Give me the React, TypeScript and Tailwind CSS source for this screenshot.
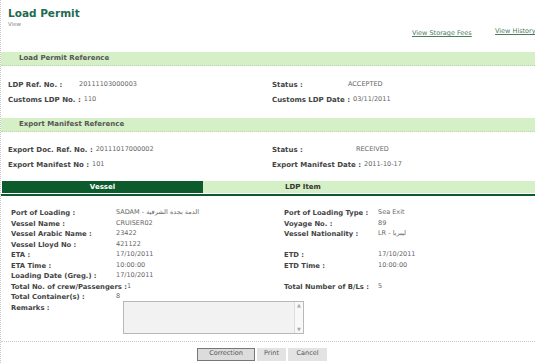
import React from 'react';

const font = { fontFamily: '"DejaVu Sans", Verdana, sans-serif' };

type Pair = { label: string; value: string; lw: number };

function RefRow({ left, right }: { left: Pair; right: Pair }) {
  return (
    <div className="flex h-[14.5px] items-center text-[6.5px] whitespace-nowrap">
      <div className="flex items-center w-[271px] pl-[7px]">
        <span className="pr-[3px] text-[7px] font-bold text-[#444] shrink-0" style={{ minWidth: left.lw }}>{left.label}</span>
        <span className="text-[#666]">{left.value}</span>
      </div>
      <div className="flex items-center">
        <span className="pr-[3px] text-[7px] font-bold text-[#444] shrink-0" style={{ minWidth: right.lw }}>{right.label}</span>
        <span className="text-[#666]">{right.value}</span>
      </div>
    </div>
  );
}

function Bar({ title }: { title: string }) {
  return (
    <div className="h-[14px] bg-[#d5efc6] border-b border-dotted border-[#b9d8a8] flex items-center pl-[18px] text-[7px] font-bold text-[#555]">
      {title}
    </div>
  );
}

const vesselRows: [string, string, string, string][] = [
  ['Port of Loading :', 'SADAM - الدمة بجدة الشرقية', 'Port of Loading Type :', 'Sea Exit'],
  ['Vessel Name :', 'CRUISER02', 'Voyage No. :', '89'],
  ['Vessel Arabic Name :', '23422', 'Vessel Nationality :', 'LR - ليبريا'],
  ['Vessel Lloyd No :', '421122', '', ''],
  ['ETA :', '17/10/2011', 'ETD :', '17/10/2011'],
  ['ETA Time :', '10:00:00', 'ETD Time :', '10:00:00'],
  ['Loading Date (Greg.) :', '17/10/2011', '', ''],
  ['Total No. of crew/Passengers :', '1', 'Total Number of B/Ls :', '5'],
  ['Total Container(s) :', '8', '', ''],
];

export default function App() {
  return (
    <div className="w-[535px] h-[363px] bg-white overflow-hidden border-l border-dotted border-[#c8c8c8]" style={font}>
      {/* Header */}
      <div className="h-[52px] relative">
        <div className="pl-[7px] pt-[7px]">
          <div className="text-[10.5px] font-bold leading-[13px] text-[#1d6c4f]">Load Permit</div>
          <div className="mt-[1px] text-[5.5px] leading-[7px] text-[#888]">View</div>
        </div>
        <a className="absolute left-[411px] top-[29px] text-[6.5px] text-[#4b7a5c] underline whitespace-nowrap">View Storage Fees</a>
        <a className="absolute left-[494px] top-[27px] text-[6.5px] text-[#4b7a5c] underline whitespace-nowrap">View History</a>
      </div>

      <Bar title="Load Permit Reference" />
      <div className="mt-[12px]">
        <RefRow
          left={{ label: 'LDP Ref. No. :', value: '20111103000003', lw: 71 }}
          right={{ label: 'Status :', value: 'ACCEPTED', lw: 76 }}
        />
        <RefRow
          left={{ label: 'Customs LDP No. :', value: '110', lw: 70 }}
          right={{ label: 'Customs LDP Date :', value: '03/11/2011', lw: 80 }}
        />
      </div>

      <div className="mt-[11px]">
        <Bar title="Export Manifest Reference" />
      </div>
      <div className="mt-[11px]">
        <RefRow
          left={{ label: 'Export Doc. Ref. No. :', value: '20111017000002', lw: 76 }}
          right={{ label: 'Status :', value: 'RECEIVED', lw: 84 }}
        />
        <RefRow
          left={{ label: 'Export Manifest No :', value: '101', lw: 83 }}
          right={{ label: 'Export Manifest Date :', value: '2011-10-17', lw: 87 }}
        />
      </div>

      {/* Tabs */}
      <div className="mt-[9px] border-b-[2px] border-[#0d5a2c] pb-[1px]">
        <div className="flex h-[12px] text-[7px] font-bold">
          <div className="ml-[1px] w-[201px] bg-[#0d5a2c] text-white flex items-center justify-center">Vessel</div>
          <div className="flex-1 bg-[#d5efc6] text-[#333] flex items-center pl-[82px]">LDP Item</div>
        </div>
      </div>

      {/* Vessel details */}
      <div className="mt-[12px] text-[6.5px] whitespace-nowrap">
        {vesselRows.map(([l, lv, r, rv], i) => (
          <div key={i} className="flex h-[10.5px] items-center">
            <div className="flex items-center w-[283px] pl-[10px]">
              <span className="min-w-[105px] shrink-0 text-[6.8px] font-bold text-[#444]">{l}</span>
              <span className="text-[#666]">{lv}</span>
            </div>
            <span className="w-[94px] text-[6.8px] font-bold text-[#444]">{r}</span>
            <span className="text-[#666]">{rv}</span>
          </div>
        ))}
        <div className="flex">
          <span className="w-[122px] pl-[10px] h-[10.5px] flex items-center text-[6.8px] font-bold text-[#444]">Remarks :</span>
          <div className="mt-[-2px] w-[181px] h-[33px] bg-[#f2f2f2] border border-[#b8b8b8] flex justify-end">
            <div className="w-[9px] border-l border-[#ddd] bg-[#f8f8f8] flex flex-col justify-between items-center text-[5px] text-[#aaa] leading-[7px]">
              <span>▲</span>
              <span>▼</span>
            </div>
          </div>
        </div>
      </div>

      <div className="mt-[7px] border-t border-dotted border-[#c8c8c8]" />

      {/* Buttons */}
      <div className="mt-[6px] flex justify-center gap-[2px] text-[6.5px] text-[#555] pr-[12px]">
        <button className="w-[58px] h-[13px] bg-[#dcdcdc] border border-[#777]">Correction</button>
        <button className="w-[29px] h-[13px] bg-[#e3e3e3] border border-[#e3e3e3]">Print</button>
        <button className="w-[39px] h-[13px] bg-[#e3e3e3] border border-[#e3e3e3]">Cancel</button>
      </div>
    </div>
  );
}
